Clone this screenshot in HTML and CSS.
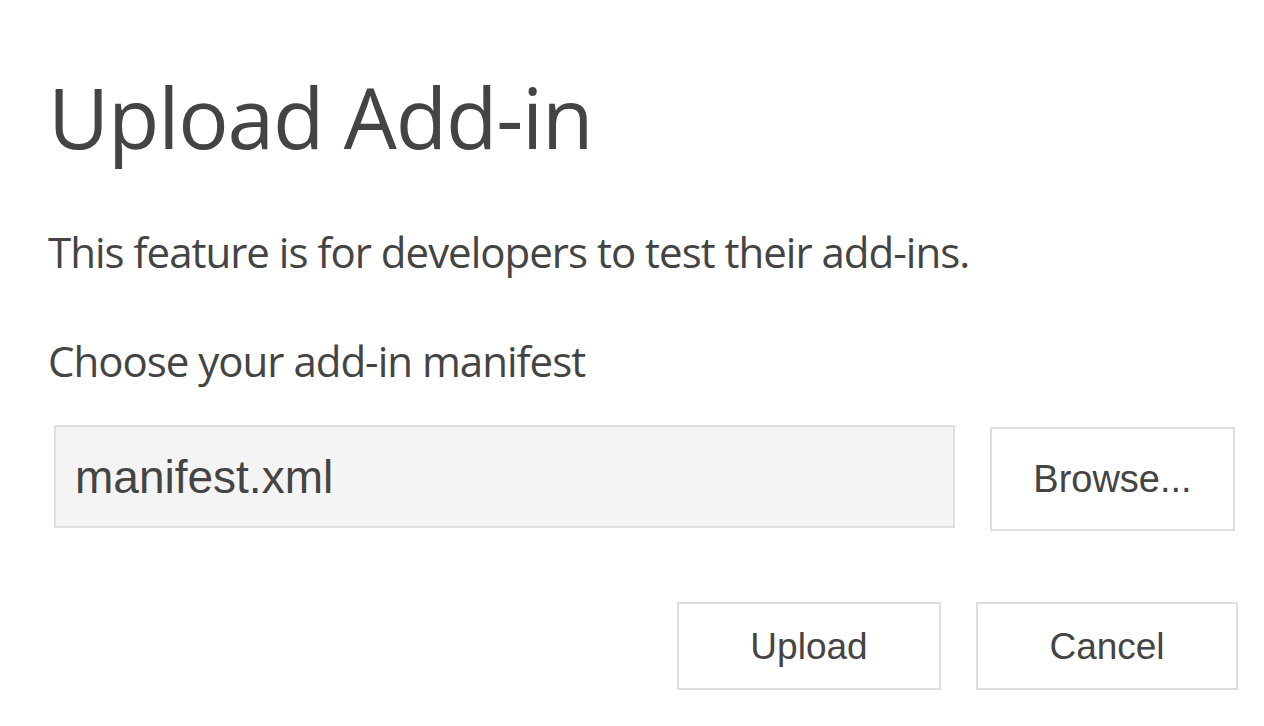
FILE: index.html
```html
<!DOCTYPE html>
<html lang="en">
<head>
<meta charset="utf-8">
<title>Upload Add-in</title>
<link rel="stylesheet" href="styles.css">
</head>
<body>
<main class="dialog">
  <h1 class="title">Upload Add-in</h1>
  <p class="desc">This feature is for developers to test their add-ins.</p>
  <p class="label">Choose your add-in manifest</p>
  <div class="file-row">
    <div class="file-input">manifest.xml</div>
    <button class="btn btn-browse" type="button">Browse...</button>
  </div>
  <div class="actions">
    <button class="btn btn-action btn-upload" type="button">Upload</button>
    <button class="btn btn-action" type="button">Cancel</button>
  </div>
</main>
</body>
</html>
```

FILE: styles.css
```css
html, body {
  margin: 0;
  padding: 0;
  background: #ffffff;
}

.dialog {
  width: 1264px;
  height: 726px;
  box-sizing: border-box;
  padding: 67px 26px 0 48px;
  font-family: "Open Sans", "Noto Sans", sans-serif;
  color: #444444;
  display: flex;
  flex-direction: column;
}

.title {
  margin: 0;
  font-size: 84px;
  font-weight: 400;
  line-height: 100px;
  height: 100px;
  letter-spacing: -1.2px;
}

.desc {
  margin: 60px 0 0;
  font-size: 42px;
  line-height: 50px;
  height: 50px;
  letter-spacing: -1px;
}

.label {
  margin: 59px 0 0;
  font-size: 42px;
  line-height: 50px;
  height: 50px;
  letter-spacing: -1px;
}

.file-row {
  margin: 39px 0 0 6px;
  display: flex;
  align-items: flex-start;
  gap: 35px;
}

.file-input {
  width: 901px;
  height: 103px;
  box-sizing: border-box;
  background: #f4f4f4;
  border: 2px solid #e0e0e0;
  display: flex;
  align-items: center;
  padding-left: 19px;
  font-family: "Liberation Sans", Arial, sans-serif;
  font-size: 46px;
  line-height: 1;
  color: #444444;
}

.btn {
  box-sizing: border-box;
  background: #ffffff;
  border: 2px solid #dedede;
  font-family: "Liberation Sans", Arial, sans-serif;
  color: #444444;
  padding: 0;
  line-height: 1;
}

.btn-browse {
  margin-top: 2px;
  width: 245px;
  height: 104px;
  font-size: 38px;
}

.actions {
  margin-top: 71px;
  display: flex;
  justify-content: flex-end;
  gap: 35px;
}

.btn-action {
  width: 262px;
  height: 88px;
  font-size: 37px;
}

.btn-upload {
  width: 264px;
}
```
